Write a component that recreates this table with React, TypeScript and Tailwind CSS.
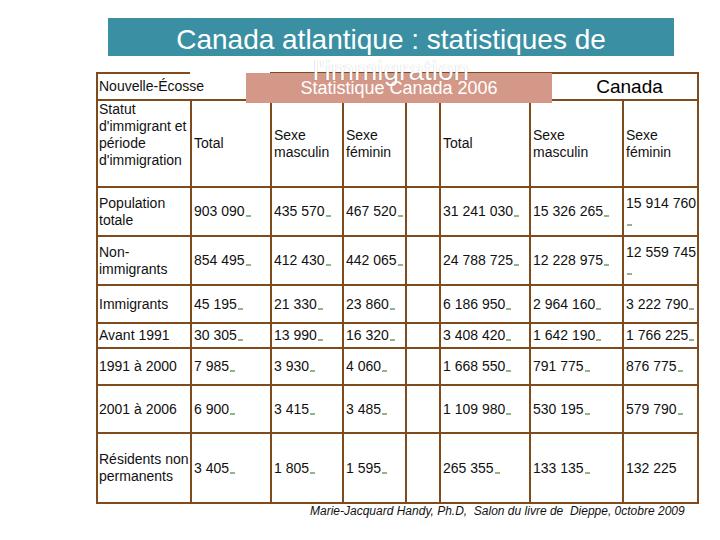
import React from "react";

const B = "border-[#7f4a1c]";

function Dash() {
  return <span className="relative top-[1px] ml-[1px] inline-block h-[2px] w-[5px] bg-[#96b482] align-baseline" />;
}

type Cell = { t: React.ReactNode; top?: boolean };

const labels: React.ReactNode[] = [
  <>Statut<br />d'immigrant et<br />période<br />d'immigration</>,
  <>Population<br />totale</>,
  <>Non-<br />immigrants</>,
  <>Immigrants</>,
  <>Avant 1991</>,
  <>1991 à 2000</>,
  <>2001 à 2006</>,
  <>Résidents non<br />permanents</>,
];

const header: React.ReactNode[] = [
  "Total",
  <>Sexe<br />masculin</>,
  <>Sexe<br />féminin</>,
  "",
  "Total",
  <>Sexe<br />masculin</>,
  <>Sexe<br />féminin</>,
];

const num = (s: string) => <>{s}<Dash /></>;
const numWrap = (s: string) => <>{s}<br /><Dash /></>;

const rows: React.ReactNode[][] = [
  [num("903 090"), num("435 570"), num("467 520"), "", num("31 241 030"), num("15 326 265"), numWrap("15 914 760")],
  [num("854 495"), num("412 430"), num("442 065"), "", num("24 788 725"), num("12 228 975"), numWrap("12 559 745")],
  [num("45 195"), num("21 330"), num("23 860"), "", num("6 186 950"), num("2 964 160"), num("3 222 790")],
  [num("30 305"), num("13 990"), num("16 320"), "", num("3 408 420"), num("1 642 190"), num("1 766 225")],
  [num("7 985"), num("3 930"), num("4 060"), "", num("1 668 550"), num("791 775"), num("876 775")],
  [num("6 900"), num("3 415"), num("3 485"), "", num("1 109 980"), num("530 195"), num("579 790")],
  [num("3 405"), num("1 805"), num("1 595"), "", num("265 355"), num("133 135"), "132 225"],
];

export default function App() {
  return (
    <div className="relative flex h-[540px] w-[720px] flex-col items-start overflow-hidden bg-white font-['Liberation_Sans',Arial,sans-serif] text-[#111]">
      {/* Title bar */}
      <div className="relative z-30 ml-[108px] mt-[18px] h-[38px] w-[566px] bg-[#3a8fa3]">
        <div className="whitespace-nowrap pt-[6px] text-center text-[28px] leading-[31px] text-white">
          Canada atlantique : statistiques de
          <br />
          <span className="[text-shadow:0_0_1px_rgba(0,0,0,0.3)]">l'immigration</span>
        </div>
      </div>

      {/* Salmon overlay */}
      <div className="absolute left-[246px] top-[73px] z-20 flex h-[30px] w-[306px] items-center justify-center bg-[#d39888] text-[18px] leading-[18px] text-white">
        Statistique Canada 2006
      </div>

      {/* Top row */}
      <div className="ml-[96px] mt-[16px] flex h-[27px]">
        <div className={`flex h-[27px] w-[94px] items-center whitespace-nowrap border-l-2 border-t-2 pl-[1px] text-[14px] leading-[17px] ${B}`}>
          Nouvelle-Écosse
        </div>
        <div className="w-[80px]" />
        <div className={`flex h-[27px] w-[429px] items-center border-r-2 border-t-2 ${B}`}>
          <div className="w-[292px]" />
          <div className="flex flex-1 justify-center text-[19px] leading-[20px] text-black">Canada</div>
        </div>
      </div>

      {/* Grid */}
      <div
        className={`ml-[96px] grid w-fit grid-cols-[94px_80px_72px_63px_34px_90px_93px_75px] grid-rows-[87px_49px_49px_38px_25px_37px_48px_70px] border-l-2 border-t-2 text-[14px] leading-[17px] ${B}`}
      >
        {labels.map((lab, r) => (
          <React.Fragment key={r}>
            <div
              className={`flex whitespace-nowrap border-b-2 border-r-2 pl-[1px] ${r === 0 ? "items-start" : "items-center"} ${B}`}
            >
              <div>{lab}</div>
            </div>
            {(r === 0 ? header : rows[r - 1]).map((c, i) => (
              <div key={i} className={`flex items-center whitespace-nowrap border-b-2 border-r-2 pl-[2px] ${B}`}>
                <div>{c}</div>
              </div>
            ))}
          </React.Fragment>
        ))}
      </div>

      {/* Footer */}
      <div className="ml-[310px] whitespace-pre text-[12px] italic leading-[14px] text-[#111]">
        {"Marie-Jacquard Handy, Ph.D,  Salon du livre de  Dieppe, 0ctobre 2009"}
      </div>
    </div>
  );
}
